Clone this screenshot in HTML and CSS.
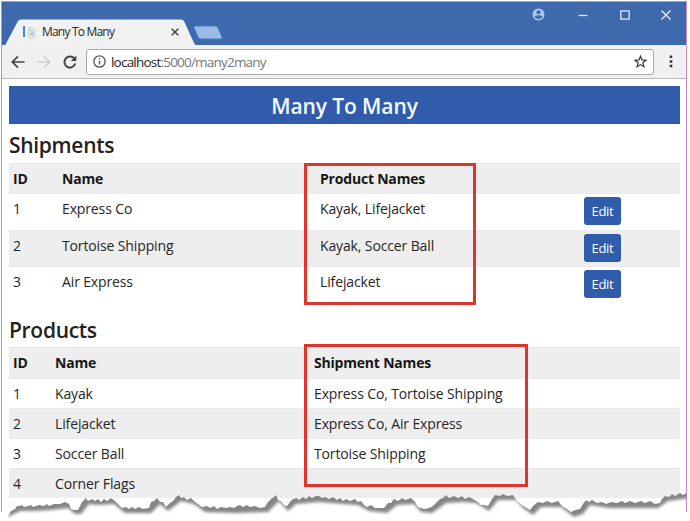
FILE: index.html
```html
<!DOCTYPE html>
<html lang="en">
<head>
<meta charset="utf-8">
<title>Many To Many</title>
<link rel="stylesheet" href="styles.css">
</head>
<body>
<div class="window">
  <header class="titlebar">
    <div class="tab">
      <svg class="tab-shape" width="200" height="27" viewBox="0 0 200 27"><path d="M3 26.500L16 2Q17 .5 19 .5H179Q181 .5 182 2L192 24Q193 26 195 26.500Z" fill="#f1f1f1"/></svg>
      <svg class="favicon" width="14" height="14" viewBox="0 0 14 14"><path d="M0 0H13V14H0Z" fill="#f8fafc"/><path d="M1 1V12" stroke="#3f8bd0" stroke-width="2.200"/><path d="M5 2H10L12 4V13H5Z" fill="#e3e6e8" stroke="#c3c9ce" stroke-width=".7"/><path d="M7 4V6M6 9H11M9 6V11" stroke="#b2b8be"/></svg>
      <span class="tab-title">Many To Many</span>
      <svg class="tab-close" width="8" height="8" viewBox="0 0 8 8"><path d="M.7.700L7.300 7.300M7.300.700L.7 7.300" stroke="#444" stroke-width="1.500"/></svg>
    </div>
    <svg class="new-tab" width="31" height="15" viewBox="0 0 31 15"><path d="M2 1H22Q24 1 25 3L29 12Q29.500 14 27 14H8Q6 14 5 12L1 3Q.5 1 2 1Z" fill="#98bce7" stroke="#477bc2"/></svg>
    <div class="controls">
      <svg width="13" height="13" viewBox="0 0 13 13"><circle cx="6.500" cy="6.500" r="6" fill="#a5c8f2"/><circle cx="6.500" cy="4.300" r="2" fill="#3f69ad"/><path d="M2.500 9Q3 7.200 6.500 7.200T10.500 9Q9 11 6.500 11T2.500 9Z" fill="#3f69ad"/></svg>
      <svg width="10" height="10" viewBox="0 0 10 10"><path d="M.5 5.500H9.500" stroke="#dcecff" stroke-width="1.300"/></svg>
      <svg width="10" height="10" viewBox="0 0 10 10"><path d="M.8.800H9.200V9.200H.8Z" fill="none" stroke="#dcecff" stroke-width="1.300"/></svg>
      <svg width="10" height="10" viewBox="0 0 10 10"><path d="M.5.500L9.500 9.500M9.500.500L.5 9.500" stroke="#e6f1ff" stroke-width="1.300"/></svg>
    </div>
  </header>
  <nav class="toolbar">
    <svg width="14" height="14" viewBox="0 0 14 14"><path d="M13.500 7H1.500M7 1.300L1.300 7L7 12.700" fill="none" stroke="#444" stroke-width="1.700"/></svg>
    <svg width="14" height="14" viewBox="0 0 14 14"><path d="M.5 7H12M7 1.300L12.700 7L7 12.700" fill="none" stroke="#ccc" stroke-width="1.500"/></svg>
    <svg width="14" height="14" viewBox="0 0 14 14"><path d="M11.600 4A5.500 5.500 0 1 0 12.300 8.500" fill="none" stroke="#444" stroke-width="1.900"/><path d="M13.300.500V6H7.800Z" fill="#444"/></svg>
    <div class="address">
      <svg width="13" height="13" viewBox="0 0 13 13"><circle cx="6.500" cy="6.500" r="5.700" fill="none" stroke="#555" stroke-width="1.300"/><path d="M6.500 5.800V9.500M6.500 3.300V4.600" stroke="#555" stroke-width="1.400"/></svg>
      <span class="url">localhost<span class="path">:5000/many2many</span></span>
      <svg class="star" width="13" height="13" viewBox="0 0 13 13"><path d="M6.500 1.200L8 4.900L12 5.200L8.900 7.800L9.900 11.700L6.500 9.600L3.100 11.700L4.100 7.800L1 5.200L5 4.900Z" fill="none" stroke="#333" stroke-width="1.200"/></svg>
    </div>
    <svg class="menu" width="4" height="13" viewBox="0 0 4 13"><path d="M.7.600H3.300V3.100H.7ZM.7 5.200H3.300V7.700H.7ZM.7 9.800H3.300V12.300H.7Z" fill="#333"/></svg>
  </nav>
  <main class="page">
    <h1 class="banner">Many To Many</h1>
    <h2 class="heading">Shipments</h2>
    <div class="table shipments">
      <div class="row head"><span>ID</span><span>Name</span><span>Product Names</span><span></span></div>
      <div class="row"><span>1</span><span>Express Co</span><span>Kayak, Lifejacket</span><button class="edit">Edit</button></div>
      <div class="row shade"><span>2</span><span>Tortoise Shipping</span><span>Kayak, Soccer Ball</span><button class="edit">Edit</button></div>
      <div class="row"><span>3</span><span>Air Express</span><span>Lifejacket</span><button class="edit">Edit</button></div>
      <div class="callout"></div>
    </div>
    <h2 class="heading second">Products</h2>
    <div class="table products">
      <div class="row head"><span>ID</span><span>Name</span><span>Shipment Names</span></div>
      <div class="row"><span>1</span><span>Kayak</span><span>Express Co, Tortoise Shipping</span></div>
      <div class="row shade"><span>2</span><span>Lifejacket</span><span>Express Co, Air Express</span></div>
      <div class="row"><span>3</span><span>Soccer Ball</span><span>Tortoise Shipping</span></div>
      <div class="row shade"><span>4</span><span>Corner Flags</span><span></span></div>
      <div class="callout"></div>
    </div>
  </main>
</div>
<svg class="tear" width="690" height="31" viewBox="0 490 690 31">
  <defs>
    <clipPath id="below"><path d="M8 516L11 511L15 509L17 506L20 506L22 505L24 507L28 506L31 505L33 507L39 505L44 506L47 504L49 506L54 504L60 504L65 502L69 504L71 509L74 510L78 510L82 502L84 500L86 498L88 501L92 499L95 501L98 499L101 502L104 499L107 501L111 498L115 501L119 505L122 508L126 507L129 509L132 507L135 509L139 507L143 509L149 508L151 502L154 501L157 498L160 502L163 502L166 507L170 503L173 501L176 497L179 495L181 498L184 497L187 500L191 498L195 502L198 504L202 507L207 506L210 508L214 506L217 509L221 507L226 508L230 507L234 508L237 506L240 505L243 507L247 505L250 507L255 506L260 508L265 507L268 502L271 499L274 497L276 495L278 500L281 501L284 505L287 506L290 502L293 499L297 498L299 500L303 497L306 499L309 496L312 498L316 496L319 496L322 498L325 497L329 499L333 497L337 500L340 498L343 501L346 499L350 501L355 499L358 502L361 501L364 505L367 507L371 505L375 508L384 508L388 503L391 503L394 499L398 501L402 498L405 500L411 498L415 502L418 507L424 509L429 508L433 506L437 502L440 499L443 498L446 495L449 498L454 496L458 498L462 496L465 499L469 497L473 499L478 502L481 505L484 505L488 506L492 499L495 495L500 496L503 494L507 496L513 495L517 501L522 505L530 510L534 505L538 502L543 503L547 501L552 503L558 501L562 506L567 509L571 512L575 510L580 509L583 504L586 500L589 502L592 500L597 503L602 502L606 504L611 502L617 503L622 501L625 503L630 501L635 503L641 501L645 503L650 501L655 504L660 503L662 499L665 496L669 497L672 494L675 496L680 493L683 495L686 493V525H8Z"/></clipPath>
    <filter id="soft" x="-5%" y="-60%" width="110%" height="220%"><feGaussianBlur stdDeviation="1.700"/></filter>
  </defs>
  <g clip-path="url(#below)">
    <rect x="0" y="490" width="690" height="31" fill="#fff"/>
    <path transform="translate(3 5)" filter="url(#soft)" fill="#858585" d="M5 480V512L17 506L32 506L49 505L65 503L72 509L78 509L86 499L95 500L111 499L122 508L148 508L157 499L165 506L178 496L191 499L202 507L230 508L265 507L276 496L285 506L293 499L316 497L340 499L355 500L366 506L384 508L394 500L411 499L418 507L429 508L443 498L460 497L473 498L486 506L495 495L513 495L520 503L530 510L538 502L558 502L571 512L580 509L587 500L606 503L655 503L665 496L690 493V480Z"/>
  </g>
</svg>
</body>
</html>
```
FILE: styles.css
```css
* { box-sizing: border-box; }
body {
  margin: 0;
  width: 690px;
  height: 521px;
  overflow: hidden;
  position: relative;
  background: #fff;
  color: #262626;
  font: 14px/20px "Open Sans", "Noto Sans", sans-serif;
}
svg { display: block; flex: none; }
h1, h2 { margin: 0; font-weight: 600; }
.window {
  width: 686px;
  height: 511px;
  margin: 1px 0 0 1px;
  border: 1px solid #c28bcb;
  border-bottom: 0;
}
.titlebar { height: 43px; background: #3f69ad; display: flex; align-items: flex-end; }
.tab {
  position: relative;
  width: 193px;
  height: 26px;
  padding: 0 16px 0 21px;
  display: flex;
  align-items: center;
}
.tab-shape { position: absolute; left: 0; top: 0; }
.favicon, .tab-title, .tab-close { position: relative; }
.tab-title { font-size: 12px; letter-spacing: -.8px; margin-left: 5px; white-space: nowrap; }
.tab-close { margin-left: auto; }
.new-tab { margin: 0 0 5px -2px; }
.controls { margin: 0 15px 24px auto; display: flex; align-items: center; gap: 31.500px; }
.controls svg:first-child { margin-right: 2px; }
.toolbar {
  height: 34px;
  padding: 0 10px 0 9px;
  background: #f0f0f0;
  border-bottom: 1px solid #bbb;
  display: flex;
  align-items: center;
  gap: 12px;
}
.address {
  flex: 1;
  height: 26px;
  margin-left: -3px;
  padding: 0 6px;
  display: flex;
  align-items: center;
  background: #fff;
  border: 1px solid #aaa;
  border-radius: 3px;
}
.url { margin-left: 5px; font-size: 13.500px; letter-spacing: -.79px; }
.path { color: #777; }
.star { margin-left: auto; }
.menu { margin: 0 3px; }
.page { padding: 7px 6px 0 7px; }
.banner {
  height: 38px;
  background: #305cab;
  color: #f4f9ff;
  text-align: center;
  font-size: 21px;
  line-height: 41px;
  letter-spacing: -.1px;
}
.heading { height: 39px; font-size: 21px; line-height: 42px; letter-spacing: -.3px; color: #222; }
.heading.second { height: 44.500px; line-height: 54px; }
.table { position: relative; }
.row {
  display: grid;
  padding-left: 4px;
  white-space: nowrap;
  border-top: 1px solid #e9eaed;
  letter-spacing: -.13px;
}
.shipments .row { grid-template-columns: 49px 258px 264px 1fr; height: 36.500px; padding-top: 3px; line-height: 24px; }
.products .row { grid-template-columns: 42px 259px 1fr; height: 30px; line-height: 29px; }
.shipments .row.head, .products .row.head {
  height: 30px;
  padding-top: 0;
  line-height: 30px;
  font-weight: 700;
  letter-spacing: -.2px;
  color: #161616;
}
.products .row.head { height: 30.500px; }
.row.head, .row.shade { background: #eee; }
.edit {
  width: 37px;
  height: 28px;
  padding: 0;
  border: 0;
  border-radius: 3px;
  background: #305cab;
  color: #fff;
  font: 13px/28px "Open Sans", "Noto Sans", sans-serif;
  letter-spacing: -.3px;
}
.callout { position: absolute; border: 3px solid #df352e; }
.shipments .callout { left: 295px; top: 0; width: 172px; height: 142px; }
.products .callout { left: 295px; top: -3px; width: 224px; height: 143px; }
.tear { position: absolute; left: 0; top: 490px; }
```
